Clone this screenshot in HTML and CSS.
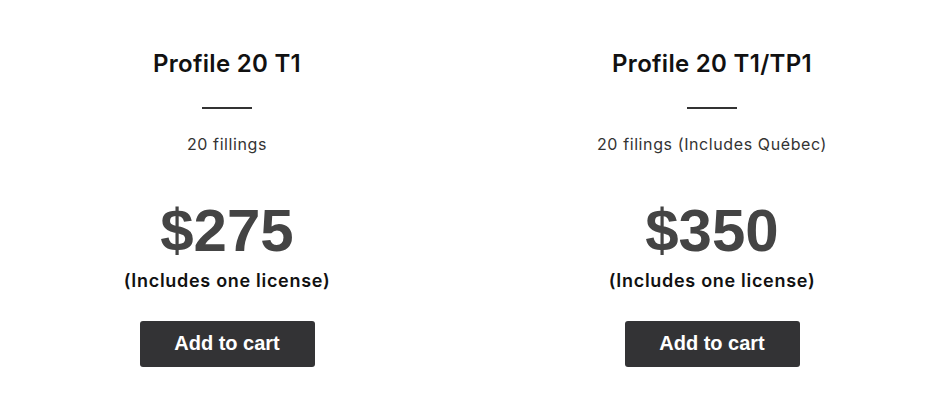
FILE: index.html
```html
<!DOCTYPE html>
<html lang="en">
<head>
<meta charset="utf-8">
<title>Profiles</title>
<link rel="stylesheet" href="styles.css">
</head>
<body>
<main class="plans">
  <section class="plan">
    <h2 class="plan-title">Profile 20 T1</h2>
    <hr class="plan-rule">
    <p class="plan-desc">20 fillings</p>
    <p class="plan-price">$275</p>
    <p class="plan-note">(Includes one license)</p>
    <button class="plan-btn" type="button">Add to cart</button>
  </section>
  <section class="plan">
    <h2 class="plan-title">Profile 20 T1/TP1</h2>
    <hr class="plan-rule">
    <p class="plan-desc">20 filings (Includes Québec)</p>
    <p class="plan-price">$350</p>
    <p class="plan-note">(Includes one license)</p>
    <button class="plan-btn" type="button">Add to cart</button>
  </section>
</main>
</body>
</html>
```
FILE: styles.css
```css
html, body {
  margin: 0;
  padding: 0;
  background: #ffffff;
}

.plans {
  display: flex;
  gap: 31px;
  padding-top: 49px;
}

.plan {
  width: 454px;
  display: flex;
  flex-direction: column;
  align-items: center;
}

.plan-title {
  margin: 0;
  font-family: "Inter", "Liberation Sans", sans-serif;
  font-weight: 600;
  font-size: 24px;
  letter-spacing: 0.3px;
  line-height: 30px;
  color: #111;
}

.plan-rule {
  width: 50px;
  height: 2px;
  margin: 28px 0 0;
  border: 0;
  background: #333;
}

.plan-desc {
  margin: 25px 0 0;
  font-family: "Inter", "Liberation Sans", sans-serif;
  font-weight: 400;
  font-size: 16px;
  letter-spacing: 0.6px;
  line-height: 20px;
  color: #333;
}

.plan-price {
  margin: 47px 0 0;
  font-family: "Liberation Sans", Arial, sans-serif;
  font-weight: 700;
  font-size: 60px;
  line-height: 60px;
  color: #444;
}

.plan-note {
  margin: 8px 0 0;
  font-family: "Inter", "Liberation Sans", sans-serif;
  font-weight: 600;
  font-size: 18px;
  letter-spacing: 0.7px;
  line-height: 24px;
  color: #111;
}

.plan-btn {
  margin-top: 28px;
  width: 175px;
  height: 46px;
  padding: 0 0 2px;
  border: 0;
  border-radius: 3px;
  background: #333335;
  color: #fff;
  font-family: "Liberation Sans", Arial, sans-serif;
  font-weight: 700;
  font-size: 20px;
  cursor: pointer;
}
```
